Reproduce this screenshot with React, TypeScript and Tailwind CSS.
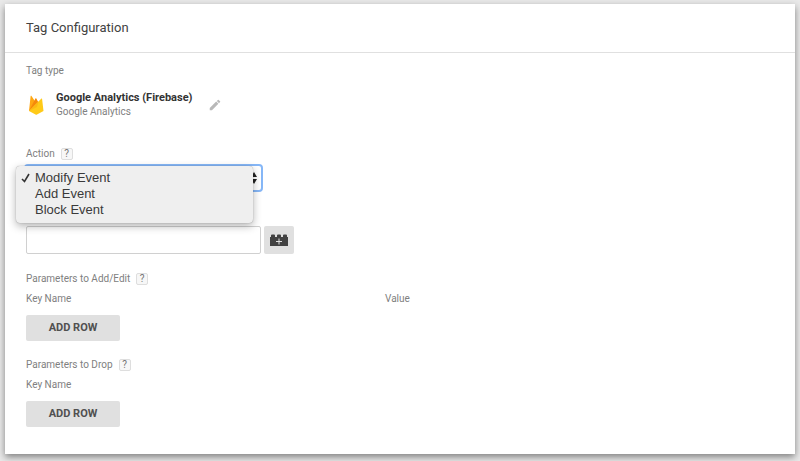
import { useState } from 'react';
import type { ReactNode } from 'react';

const ACTIONS = ['Modify Event', 'Add Event', 'Block Event'];

function FirebaseLogo() {
  return (
    <svg viewBox="0 0 16 20" className="h-5 w-4" aria-hidden="true">
      <path d="M1 16 2.600 1.200c.1-.5.7-.6.9-.1L6.500 5.500 10 10z" fill="#ffa712" />
      <path d="M1 16 11 8.500 8.300 3.600c-.2-.4-.7-.4-.9 0z" fill="#f58a0b" />
      <path d="M1 16 13.200 3.700c.3-.3.8-.1.900.3L15.500 16l-6.500 3.600c-.5.3-1 .3-1.500 0z" fill="#ffca18" />
      <path d="M1 16 10.500 6.400 9 12z" fill="#fbb815" />
    </svg>
  );
}

function PencilIcon() {
  return (
    <svg viewBox="0 0 24 24" className="h-3.5 w-3.5" fill="#b8b8b8" aria-hidden="true">
      <path d="M3 17.250V21h3.750L17.810 9.940l-3.750-3.750L3 17.250zM20.710 7.040a1 1 0 0 0 0-1.410l-2.340-2.340a1 1 0 0 0-1.410 0l-1.830 1.830 3.750 3.750 1.830-1.830z" />
    </svg>
  );
}

function BrickIcon() {
  return (
    <svg viewBox="0 0 20 12" className="h-3 w-5" aria-hidden="true">
      <path
        d="M1 3h1V1.500Q2 .5 3 .5h2Q6 .5 6 1.500V3h2V1.500Q8 .5 9 .5h2Q12 .5 12 1.500V3h2V1.500Q14 .5 15 .5h2Q18 .5 18 1.500V3h1v9H1z"
        fill="#424242"
      />
      <path d="M10 4.500v6M7 7.500h6" stroke="#e0e0e0" strokeWidth="1" />
    </svg>
  );
}

function HelpBadge({ topic }: { topic: string }) {
  return (
    <button
      type="button"
      aria-label={`Help: ${topic}`}
      className="flex h-3 w-3 items-center justify-center rounded-xs border border-[#dedede] bg-[#f7f7f7] text-[10px] leading-3 text-[#757575]"
    >
      ?
    </button>
  );
}

function FieldLabel({ children }: { children: ReactNode }) {
  return <div className="flex h-4 items-center gap-1.5 text-[10px] leading-4 text-[#808080]">{children}</div>;
}

function AddRowButton() {
  return (
    <button
      type="button"
      className="block h-[26px] w-[94px] rounded-xs bg-[#e0e0e0] text-[11px] font-bold leading-4 text-[#505050]"
    >
      ADD ROW
    </button>
  );
}

interface ParameterTableProps {
  title: string;
  columns: string[];
}

function ParameterTable({ title, columns }: ParameterTableProps) {
  return (
    <section>
      <FieldLabel>
        <span>{title}</span>
        <HelpBadge topic={title} />
      </FieldLabel>
      <table className="mt-1 mb-2 w-full table-fixed text-left text-[10px] leading-4 text-[#808080]">
        <thead>
          <tr>
            {columns.map((column) => (
              <th key={column} scope="col" className="p-0 font-normal first:w-[48%]">
                {column}
              </th>
            ))}
          </tr>
        </thead>
      </table>
      <AddRowButton />
    </section>
  );
}

export default function App() {
  const [action, setAction] = useState(ACTIONS[0]);
  const [open, setOpen] = useState(true);
  const [eventName, setEventName] = useState('');

  const choose = (name: string) => {
    setAction(name);
    setOpen(false);
  };

  return (
    <div className="min-h-screen bg-[#e9e9e9] px-[5px] pt-1 pb-[7px] font-[Roboto,sans-serif]">
      <main className="bg-white pb-[27px] shadow-[0_3px_7px_rgba(0,0,0,0.45)]">
        <header className="flex h-[49px] items-center border-b border-[#e0e0e0] px-[21px]">
          <h1 className="text-[13px] leading-5 text-[#424242]">Tag Configuration</h1>
        </header>

        <div className="px-[21px] pt-[10px]">
          <FieldLabel>Tag type</FieldLabel>

          <div className="mt-3 flex items-center">
            <div className="mr-3 pl-[2px]">
              <FirebaseLogo />
            </div>
            <div className="leading-[14px]">
              <div className="text-[11px] font-bold text-[#333]">Google Analytics (Firebase)</div>
              <div className="text-[10px] text-[#808080]">Google Analytics</div>
            </div>
            <button type="button" aria-label="Edit tag type" className="ml-4">
              <PencilIcon />
            </button>
          </div>

          <div className="mt-[27px]">
            <FieldLabel>
              <label htmlFor="action">Action</label>
              <HelpBadge topic="Action" />
            </FieldLabel>
            <div className="relative mt-1 w-[235px]">
              <select
                id="action"
                value={action}
                onChange={(e) => setAction(e.target.value)}
                onMouseDown={(e) => {
                  e.preventDefault();
                  setOpen(!open);
                }}
                className="block h-6 w-full appearance-none rounded-xs bg-white px-2 text-[13px] text-[#333] outline-2 outline-[#86b7f7]"
              >
                {ACTIONS.map((name) => (
                  <option key={name}>{name}</option>
                ))}
              </select>
              <svg
                viewBox="0 0 8 12"
                className="pointer-events-none absolute top-1.5 right-[3px] h-3 w-2"
                fill="#222"
                aria-hidden="true"
              >
                <path d="M4 0 7 5H1zM4 12 7 7H1z" />
              </svg>

              {open && (
                <ul className="absolute top-0 -left-[10px] z-10 w-[237px] rounded-sm bg-[#efefef] pt-1 pb-[5px] shadow-[0_3px_8px_rgba(0,0,0,0.3),0_0_1px_rgba(0,0,0,0.4)]">
                  {ACTIONS.map((name) => (
                    <li key={name}>
                      <button
                        type="button"
                        onClick={() => choose(name)}
                        className="flex h-4 w-full items-center gap-[3px] pl-1 font-['Liberation_Sans',sans-serif] text-[13px] leading-4 text-[#3a3a3a]"
                      >
                        <svg viewBox="0 0 12 12" className="h-3 w-3" fill="none" aria-hidden="true">
                          {name === action && <path d="M2 7 4.500 9.500 9 2" stroke="#333" strokeWidth="1.600" />}
                        </svg>
                        {name}
                      </button>
                    </li>
                  ))}
                </ul>
              )}
            </div>
          </div>

          <div className="mt-9 flex items-center gap-[3px]">
            <input
              aria-label="Event name"
              type="text"
              value={eventName}
              onChange={(e) => setEventName(e.target.value)}
              className="h-7 w-[235px] rounded-xs border border-[#d0d0d0] px-2 text-[13px] text-[#333] outline-none"
            />
            <button
              type="button"
              aria-label="Insert variable"
              className="flex h-7 w-[30px] items-center justify-center rounded-xs bg-[#e0e0e0]"
            >
              <BrickIcon />
            </button>
          </div>

          <div className="mt-[17px] flex flex-col gap-4">
            <ParameterTable title="Parameters to Add/Edit" columns={['Key Name', 'Value']} />
            <ParameterTable title="Parameters to Drop" columns={['Key Name']} />
          </div>
        </div>
      </main>
    </div>
  );
}
